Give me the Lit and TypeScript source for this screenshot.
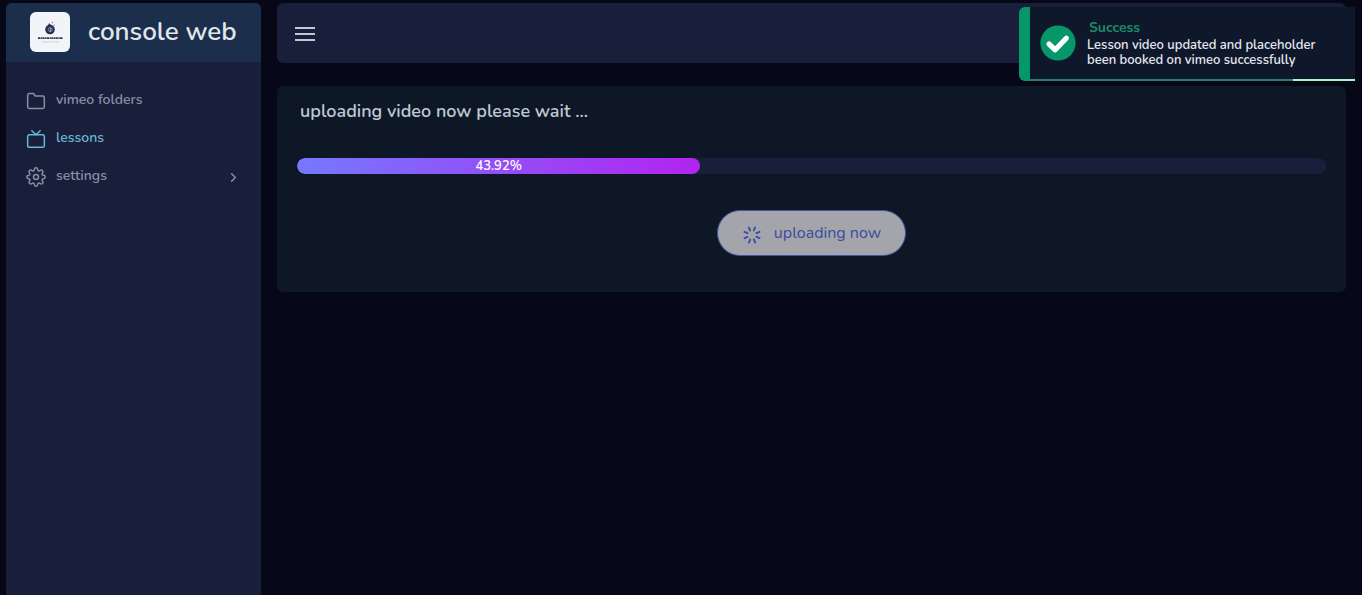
import { LitElement, html, css, svg } from "lit";
import { customElement, property, state } from "lit/decorators.js";
import { classMap } from "lit/directives/class-map.js";

const icons: Record<string, unknown> = {
  folder: svg`<path d="M22 19a2 2 0 0 1-2 2H4a2 2 0 0 1-2-2V5a2 2 0 0 1 2-2h5l2 3h9a2 2 0 0 1 2 2z" />`,
  tv: svg`<rect x="2" y="7" width="20" height="15" rx="2" /><path d="M17 2l-5 5-5-5" />`,
  gear: svg`<circle cx="12" cy="12" r="3" /><path d="M19.4 15a1.65 1.65 0 0 0 .33 1.82l.06.06a2 2 0 0 1 0 2.83 2 2 0 0 1-2.83 0l-.06-.06a1.65 1.65 0 0 0-1.82-.33 1.65 1.65 0 0 0-1 1.51V21a2 2 0 0 1-2 2 2 2 0 0 1-2-2v-.09A1.65 1.65 0 0 0 9 19.4a1.65 1.65 0 0 0-1.82.33l-.06.06a2 2 0 0 1-2.83 0 2 2 0 0 1 0-2.83l.06-.06a1.65 1.65 0 0 0 .33-1.82 1.65 1.65 0 0 0-1.51-1H3a2 2 0 0 1-2-2 2 2 0 0 1 2-2h.09A1.65 1.65 0 0 0 4.6 9a1.65 1.65 0 0 0-.33-1.82l-.06-.06a2 2 0 0 1 0-2.83 2 2 0 0 1 2.83 0l.06.06a1.65 1.65 0 0 0 1.82.33H9a1.65 1.65 0 0 0 1-1.51V3a2 2 0 0 1 2-2 2 2 0 0 1 2 2v.09a1.65 1.65 0 0 0 1 1.51 1.65 1.65 0 0 0 1.82-.33l.06-.06a2 2 0 0 1 2.83 0 2 2 0 0 1 0 2.83l-.06.06a1.65 1.65 0 0 0-.33 1.82V9a1.65 1.65 0 0 0 1.51 1H21a2 2 0 0 1 2 2 2 2 0 0 1-2 2h-.09a1.65 1.65 0 0 0-1.51 1z" />`,
};

@customElement("side-bar")
export class SideBar extends LitElement {
  static styles = css`
    :host { display: flex; flex-direction: column; background: #191e3a; border-radius: 6px 6px 0 0; overflow: hidden; }
    .brand { display: flex; align-items: center; gap: 18px; box-sizing: border-box; height: 59px; padding: 0 24px 2px; background: #1b2e4b; color: #e0e6ed; font-size: 26px; font-weight: 600; text-decoration: none; white-space: nowrap; }
    .logo { width: 40px; height: 40px; flex: none; }
    .menu { list-style: none; margin: 0; padding: 20px; }
    .item { display: flex; align-items: center; gap: 10px; height: 38px; color: #888ea8; font-size: 14px; font-weight: 600; text-decoration: none; }
    .item.active { color: #68b5d8; }
    .label { flex: 1; padding-bottom: 4px; }
    .icon { width: 20px; height: 20px; fill: none; stroke: currentColor; stroke-width: 1.8; stroke-linecap: round; stroke-linejoin: round; overflow: visible; }
    .arrow { width: 15px; height: 15px; fill: none; stroke: currentColor; stroke-width: 2.4; stroke-linecap: round; stroke-linejoin: round; }
  `;

  @property() active = "lessons";

  private items = [
    { label: "vimeo folders", icon: "folder", nested: false },
    { label: "lessons", icon: "tv", nested: false },
    { label: "settings", icon: "gear", nested: true },
  ];

  render() {
    return html`
      <a class="brand" href="#">
        <svg class="logo" viewBox="0 0 40 40" aria-hidden="true">
          <rect width="40" height="40" rx="6" fill="#f1f5fa" />
          <circle cx="20" cy="17.5" r="4.8" fill="#292f4d" />
          <path d="M18 13.5l1-2.5 2 2z" fill="#34395c" />
          <circle cx="20.3" cy="17.5" r="2" fill="none" stroke="#8ba0c9" stroke-width=".8" />
          <path d="M20.5 16v4" stroke="#c7d1e8" stroke-width=".7" />
          <circle cx="22.5" cy="10.6" r=".8" fill="#d46f70" />
          <circle cx="24.3" cy="13" r=".6" fill="#5b6284" />
          <path d="M8 26.2h25" stroke="#343849" stroke-width="1.8" stroke-dasharray="2.2 .5 1.3 .4" />
          <path d="M12 29.8h17" stroke="#b7bdca" stroke-width=".8" stroke-dasharray="1.6 .6" />
        </svg>
        <span>console web</span>
      </a>
      <nav aria-label="Main">
        <ul class="menu">
          ${this.items.map(
            (i) => html`<li>
              <a class=${classMap({ item: true, active: i.label === this.active })} href="#">
                <svg class="icon" viewBox="0 0 24 24" aria-hidden="true">${icons[i.icon]}</svg>
                <span class="label">${i.label}</span>
                ${i.nested ? html`<svg class="arrow" viewBox="0 0 24 24" aria-hidden="true"><path d="M9 18l6-6-6-6" /></svg>` : ""}
              </a>
            </li>`
          )}
        </ul>
      </nav>
    `;
  }
}

@customElement("upload-card")
export class UploadCard extends LitElement {
  static styles = css`
    :host { display: block; padding: 13px 20px 36px; background: #0e1726; border-radius: 6px; }
    .title { margin: 0 3px; color: #bfc9d4; font-size: 18px; line-height: 24px; font-weight: 600; }
    .track { height: 16px; margin: 35px 0 36px; border-radius: 8px; background: #191e3a; overflow: hidden; }
    .bar { height: 16px; border-radius: 8px; background: linear-gradient(to right, #7579ff 0%, #b224ef 100%); color: #fff; font-size: 13px; line-height: 16px; font-weight: 600; text-align: center; }
    .actions { display: flex; justify-content: center; }
    .upload { display: flex; align-items: center; gap: 12px; height: 46px; padding: 0 24px; border: 1px solid #4052a8; border-radius: 23px; background: #a3a5aa; color: #3b4ba3; font: inherit; font-size: 16px; }
    .spinner { width: 20px; height: 20px; margin-top: 4px; fill: none; stroke: currentColor; stroke-width: 2.2; stroke-linecap: round; }
  `;

  @property({ type: Number }) percent = 0;
  @property({ type: Number }) filled = 0;

  render() {
    return html`
      <h1 class="title">uploading video now please wait ...</h1>
      <div class="track" role="progressbar" aria-label="Upload progress" aria-valuemin="0" aria-valuemax="100" aria-valuenow=${this.percent}>
        <div class="bar" style="width:${this.filled}%">${this.percent}%</div>
      </div>
      <div class="actions">
        <button class="upload" type="button" disabled>
          <svg class="spinner" viewBox="0 0 24 24" aria-hidden="true">
            ${[22, 67, 112, 157, 202, 247, 292, 337].map(
              (a) => svg`<path d="M12 2.2v4" transform="rotate(${a} 12 12)" />`
            )}
          </svg>
          <span>uploading now</span>
        </button>
      </div>
    `;
  }
}

@customElement("toast-message")
export class ToastMessage extends LitElement {
  static styles = css`
    :host { display: block; box-sizing: border-box; border-left: 11px solid #059669; border-radius: 6px 0 0 6px; background: #0f172a; overflow: hidden; }
    .body { display: flex; align-items: center; gap: 11px; height: 72px; padding: 0 24px 0 10px; }
    .check { width: 36px; height: 36px; flex: none; }
    .heading { margin: 1px 0 2px 2px; color: #1d8c68; font-size: 14px; line-height: 16px; font-weight: 700; }
    .text { margin: 0; color: #e6e9f2; font-size: 13px; line-height: 15px; font-weight: 600; }
    .timer { display: flex; justify-content: flex-end; height: 2px; background: #2f7d69; }
    .left { background: #a7f3d0; }
  `;

  @property({ type: Number }) remaining = 19;

  render() {
    return html`
      <div class="body" role="status">
        <svg class="check" viewBox="0 0 36 36" aria-hidden="true">
          <circle cx="18" cy="18" r="17.6" fill="#059669" />
          <path d="M9 19l6.2 5.8L26.3 13.2" fill="none" stroke="#fff" stroke-width="5.2" stroke-linecap="round" stroke-linejoin="round" />
        </svg>
        <div>
          <p class="heading">Success</p>
          <p class="text">Lesson video updated and placeholder been booked on vimeo successfully</p>
        </div>
      </div>
      <div class="timer"><div class="left" style="width:${this.remaining}%"></div></div>
    `;
  }
}

@customElement("app-root")
export class AppRoot extends LitElement {
  static styles = css`
    :host { display: grid; grid-template-columns: 255px minmax(0, 1fr); gap: 16px; box-sizing: border-box; min-height: 100vh; padding: 3px 16px 0 6px; background: #060818; font-family: Nunito, "Noto Sans", "Open Sans", sans-serif; }
    .topbar { display: flex; align-items: center; height: 60px; margin-bottom: 23px; padding: 0 18px; border-radius: 6px; background: #191e3a; }
    .toggle { display: flex; padding: 0; border: 0; background: none; color: #bfc9d4; }
    .bars { width: 20px; height: 14px; margin-top: 2px; stroke: currentColor; stroke-width: 2; }
    .toast { position: absolute; top: 7px; right: 7px; width: 336px; }
  `;

  @state() private percent = 43.92;
  @state() private filled = 39.2;

  render() {
    return html`
      <side-bar></side-bar>
      <main>
        <header class="topbar">
          <button class="toggle" type="button" aria-label="Toggle menu">
            <svg class="bars" viewBox="0 0 20 14" aria-hidden="true"><path d="M0 1h20M0 7h20M0 13h20" /></svg>
          </button>
        </header>
        <upload-card .percent=${this.percent} .filled=${this.filled}></upload-card>
      </main>
      <toast-message class="toast"></toast-message>
    `;
  }
}
